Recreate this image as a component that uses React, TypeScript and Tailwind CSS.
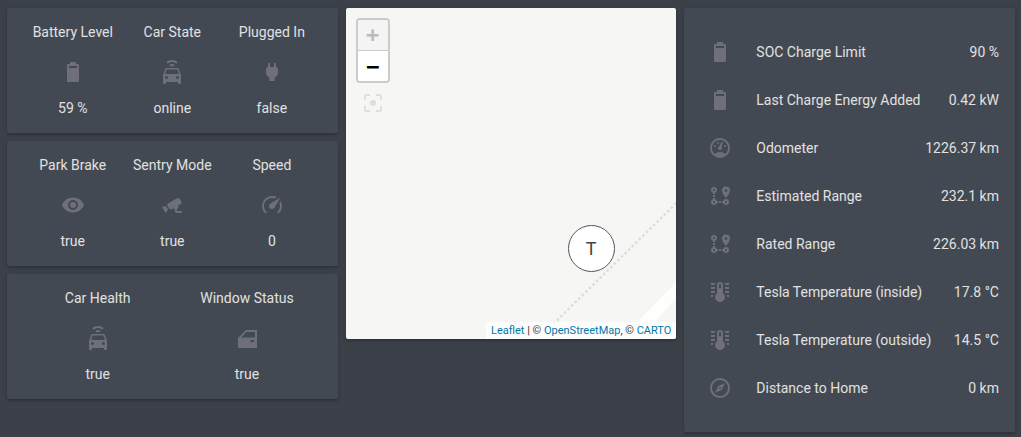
const battery = "M16.67,4H15V2H9V4H7.33A1.33,1.33 0 0,0 6,5.33V20.67C6,21.4 6.6,22 7.33,22H16.67A1.33,1.33 0 0,0 18,20.67V5.33C18,4.6 17.4,4 16.67,4M16,8H8V6H16V8Z";
const carConnected = "M5,14H19L17.5,9.5H6.5L5,14M17.5,19A1.5,1.5 0 0,0 19,17.5A1.5,1.5 0 0,0 17.5,16A1.5,1.5 0 0,0 16,17.5A1.5,1.5 0 0,0 17.5,19M6.5,19A1.5,1.5 0 0,0 8,17.5A1.5,1.5 0 0,0 6.5,16A1.5,1.5 0 0,0 5,17.5A1.5,1.5 0 0,0 6.5,19M18.92,9L21,15V23A1,1 0 0,1 20,24H19A1,1 0 0,1 18,23V22H6V23A1,1 0 0,1 5,24H4A1,1 0 0,1 3,23V15L5.08,9C5.28,8.42 5.85,8 6.5,8H17.5C18.15,8 18.72,8.42 18.92,9M12,0C14.12,0 16.15,.86 17.65,2.35L16.23,3.77C15.11,2.65 13.59,2 12,2C10.41,2 8.89,2.65 7.77,3.77L6.36,2.35C7.85,.86 9.88,0 12,0M12,4C13.06,4 14.07,4.44 14.82,5.18L13.4,6.6C13.03,6.22 12.53,6 12,6C11.5,6 10.97,6.22 10.6,6.6L9.18,5.18C9.93,4.44 10.94,4 12,4Z";
const plug = "M16,7V3H14V7H10V3H8V7H8C7,7 6,8 6,9V14.5L9.5,18V21H14.5V18L18,14.5V9C18,8 17,7 16,7Z";
const eye = "M12,9A3,3 0 0,0 9,12A3,3 0 0,0 12,15A3,3 0 0,0 15,12A3,3 0 0,0 12,9M12,17A5,5 0 0,1 7,12A5,5 0 0,1 12,7A5,5 0 0,1 17,12A5,5 0 0,1 12,17M12,4.5C7,4.5 2.73,7.61 1,12C2.73,16.39 7,19.5 12,19.5C17,19.5 21.27,16.39 23,12C21.27,7.61 17,4.5 12,4.5Z";
const cctv = "M18.15,4.94C17.77,4.91 17.37,5 17,5.2L8.35,10.2C7.39,10.76 7.07,12 7.62,12.94L9.12,15.53C9.67,16.5 10.89,16.82 11.85,16.27L13.65,15.23C13.92,15.69 14.32,16.06 14.81,16.27V18.04C14.81,19.13 15.7,20 16.81,20H22V18.04H16.81V16.27C17.72,15.87 18.31,14.97 18.31,14C18.31,13.54 18.19,13.11 17.97,12.73L20.5,11.27C21.47,10.71 21.8,9.5 21.24,8.53L19.74,5.94C19.4,5.34 18.79,5 18.15,4.94M6.22,13.17L2,13.87L2.75,15.17L4.75,18.63L5.5,19.93L8.22,16.63L6.22,13.17Z";
const speedometer = "M12,16A3,3 0 0,1 9,13C9,11.88 9.61,10.9 10.5,10.39L20.21,4.77L14.68,14.35C14.18,15.33 13.17,16 12,16M12,3C13.81,3 15.5,3.5 16.97,4.32L14.87,5.53C14,5.19 13,5 12,5A8,8 0 0,0 4,13C4,15.21 4.89,17.21 6.34,18.65H6.35C6.74,19.04 6.74,19.67 6.35,20.06C5.96,20.45 5.32,20.45 4.93,20.07V20.07C3.12,18.26 2,15.76 2,13A10,10 0 0,1 12,3M22,13C22,15.76 20.88,18.26 19.07,20.07V20.07C18.68,20.45 18.05,20.45 17.66,20.06C17.27,19.67 17.27,19.04 17.66,18.65V18.65C19.11,17.2 20,15.21 20,13C20,12 19.81,11 19.46,10.1L20.67,8C21.5,9.5 22,11.18 22,13Z";
const carDoor = "M3,12L11,4H22V22H3V12ZM11.5,6L6,11.5H20V6H11.5ZM15.5,14H19V16H15.5V14Z";
const gauge = "M12,2A10,10 0 0,0 2,12A10,10 0 0,0 12,22A10,10 0 0,0 22,12A10,10 0 0,0 12,2M12,4A8,8 0 0,1 20,12C20,14.4 19,16.5 17.3,18C15.9,16.7 14,16 12,16C10,16 8.2,16.7 6.7,18C5,16.5 4,14.4 4,12A8,8 0 0,1 12,4M14,5.89C13.62,5.9 13.26,6.15 13.1,6.54L11.81,9.77L11.71,10C11,10.13 10.41,10.6 10.14,11.26C9.73,12.29 10.23,13.45 11.26,13.86C12.29,14.27 13.45,13.77 13.86,12.74C14.12,12.08 14,11.32 13.57,10.76L13.67,10.5L14.96,7.29L14.97,7.26C15.17,6.75 14.92,6.17 14.41,5.96C14.28,5.91 14.15,5.89 14,5.89M10,6A1,1 0 0,0 9,7A1,1 0 0,0 10,8A1,1 0 0,0 11,7A1,1 0 0,0 10,6M7,9A1,1 0 0,0 6,10A1,1 0 0,0 7,11A1,1 0 0,0 8,10A1,1 0 0,0 7,9M17,9A1,1 0 0,0 16,10A1,1 0 0,0 17,11A1,1 0 0,0 18,10A1,1 0 0,0 17,9Z";
const markerPath = "M18,15A3,3 0 0,1 21,18A3,3 0 0,1 18,21C16.69,21 15.58,20.17 15.17,19H14V17H15.17C15.58,15.83 16.69,15 18,15M18,17A1,1 0 0,0 17,18A1,1 0 0,0 18,19A1,1 0 0,0 19,18A1,1 0 0,0 18,17M18,8A1.43,1.43 0 0,0 19.43,6.57C19.43,5.78 18.79,5.14 18,5.14C17.21,5.14 16.57,5.78 16.57,6.57A1.43,1.43 0 0,0 18,8M18,2.57A4,4 0 0,1 22,6.57C22,9.56 18,14 18,14C18,14 14,9.56 14,6.57A4,4 0 0,1 18,2.57M8.83,17H10V19H8.83C8.42,20.17 7.31,21 6,21A3,3 0 0,1 3,18C3,16.69 3.83,15.58 5,15.17V14H7V15.17C7.85,15.47 8.53,16.15 8.83,17M6,17A1,1 0 0,0 5,18A1,1 0 0,0 6,19A1,1 0 0,0 7,18A1,1 0 0,0 6,17M6,3A3,3 0 0,1 9,6C9,7.31 8.17,8.42 7,8.83V10H5V8.83C3.83,8.42 3,7.31 3,6A3,3 0 0,1 6,3M6,5A1,1 0 0,0 5,6A1,1 0 0,0 6,7A1,1 0 0,0 7,6A1,1 0 0,0 6,5M11,19V17H13V19H11M7,13H5V11H7V13Z";
const thermometer = "M17,3H21V5H17V3M17,7H21V9H17V7M17,11H21V13H17.75L17,12.1V11M21,15V17H19C19,16.31 18.9,15.63 18.71,15H21M7,3V5H3V3H7M7,7V9H3V7H7M7,11V12.1L6.25,13H3V11H7M3,15H5.29C5.1,15.63 5,16.31 5,17H3V15M15,13V5A3,3 0 0,0 12,2A3,3 0 0,0 9,5V13A6,6 0 0,0 7,17A5,5 0 0,0 12,22A5,5 0 0,0 17,17C17,15.79 16.21,14.27 15,13M12,4A1,1 0 0,1 13,5V8H11V5A1,1 0 0,1 12,4Z";
const compass = "M7,17L10.2,10.2L17,7L13.8,13.8L7,17M12,11.1A0.9,0.9 0 0,0 11.1,12A0.9,0.9 0 0,0 12,12.9A0.9,0.9 0 0,0 12.9,12A0.9,0.9 0 0,0 12,11.1M12,2A10,10 0 0,1 22,12A10,10 0 0,1 12,22A10,10 0 0,1 2,12A10,10 0 0,1 12,2M12,4A8,8 0 0,0 4,12A8,8 0 0,0 12,20A8,8 0 0,0 20,12A8,8 0 0,0 12,4Z";
const focus = "M19,19H15V21H19A2,2 0 0,0 21,19V15H19M19,3H15V5H19V9H21V5A2,2 0 0,0 19,3M5,5H9V3H5A2,2 0 0,0 3,5V9H5M5,15H3V19A2,2 0 0,0 5,21H9V19H5V15M12,9A3,3 0 0,0 9,12A3,3 0 0,0 12,15A3,3 0 0,0 15,12A3,3 0 0,0 12,9Z";

function Icon({ d }: { d: string }) {
  return (
    <svg viewBox="0 0 24 24" className="h-6 w-6 fill-[#6f6f7b]" fillRule="evenodd">
      <path d={d} />
    </svg>
  );
}

const cards = [
  [
    { title: "Battery Level", icon: battery, value: "59 %" },
    { title: "Car State", icon: carConnected, value: "online" },
    { title: "Plugged In", icon: plug, value: "false" },
  ],
  [
    { title: "Park Brake", icon: eye, value: "true" },
    { title: "Sentry Mode", icon: cctv, value: "true" },
    { title: "Speed", icon: speedometer, value: "0" },
  ],
  [
    { title: "Car Health", icon: carConnected, value: "true" },
    { title: "Window Status", icon: carDoor, value: "true" },
  ],
];

const rows = [
  { icon: battery, label: "SOC Charge Limit", value: "90 %" },
  { icon: battery, label: "Last Charge Energy Added", value: "0.42 kW" },
  { icon: gauge, label: "Odometer", value: "1226.37 km" },
  { icon: markerPath, label: "Estimated Range", value: "232.1 km" },
  { icon: markerPath, label: "Rated Range", value: "226.03 km" },
  { icon: thermometer, label: "Tesla Temperature (inside)", value: "17.8 °C" },
  { icon: thermometer, label: "Tesla Temperature (outside)", value: "14.5 °C" },
  { icon: compass, label: "Distance to Home", value: "0 km" },
];

function MapCard() {
  return (
    <div className="relative h-[331px] overflow-hidden rounded-[2px] bg-[#f6f6f4] shadow-[0_2px_2px_rgba(0,0,0,0.14),0_1px_5px_rgba(0,0,0,0.12)]">
      <svg viewBox="0 0 330 331" className="absolute inset-0 h-full w-full">
        <path d="M207 316L330 195" stroke="#dddddb" strokeWidth="2.5" strokeDasharray="2.5 2.5" fill="none" />
        <polygon points="291,314 330,274 330,289 309,314 291,331" fill="#fefefd" />
      </svg>
      <div className="absolute left-[10px] top-[10px] w-[34px] overflow-hidden rounded-[4px] border-2 border-[#cbcbca] font-['DejaVu_Sans_Mono',monospace] text-[22px] font-bold leading-[30px]">
        <div className="h-[31px] border-b border-[#ccc] bg-[#f4f4f4] text-center text-[#bbb]">+</div>
        <div className="h-[30px] bg-white pt-[1px] text-center text-black">−</div>
      </div>
      <svg viewBox="0 0 24 24" className="absolute left-[15px] top-[83px] h-6 w-6 fill-[#dedede]">
        <path d={focus} />
      </svg>
      <div className="absolute left-[222px] top-[217px] flex h-[47px] w-[47px] items-center justify-center rounded-full border border-[#555] bg-white font-['Roboto',sans-serif] text-lg text-[#444]">
        T
      </div>
      <div className="absolute bottom-0 right-0 bg-white/80 px-[5px] font-['Roboto',sans-serif] text-[11px] leading-[17px] text-[#333]">
        <span className="text-[#0078a8]">Leaflet</span> | © <span className="text-[#0078a8]">OpenStreetMap</span>, © <span className="text-[#0078a8]">CARTO</span>
      </div>
    </div>
  );
}

export default function App() {
  return (
    <div className="h-[437px] w-[1021px] overflow-hidden bg-[#3c4048] font-['Roboto',sans-serif] text-sm text-[#e1e1e1]">
      <div className="grid grid-cols-3 items-start gap-2 pl-[7px] pr-[6px] pt-2">
        <div className="flex flex-col gap-2">
          {cards.map((items) => (
            <div
              key={items[0].title}
              className="flex h-[125px] rounded-[2px] bg-[#434952] px-4 pb-[15px] pt-[14px] shadow-[0_2px_2px_rgba(0,0,0,0.14),0_1px_5px_rgba(0,0,0,0.12)]"
            >
              {items.map((item) => (
                <div key={item.title} className="flex flex-1 flex-col items-center leading-5">
                  <div>{item.title}</div>
                  <div className="mb-[14px] mt-[18px]">
                    <Icon d={item.icon} />
                  </div>
                  <div>{item.value}</div>
                </div>
              ))}
            </div>
          ))}
        </div>
        <MapCard />
        <div className="flex flex-col rounded-[2px] bg-[#434952] py-5 pl-6 pr-4 shadow-[0_2px_2px_rgba(0,0,0,0.14),0_1px_5px_rgba(0,0,0,0.12)]">
          {rows.map((row) => (
            <div key={row.label} className="flex h-12 items-center">
              <Icon d={row.icon} />
              <div className="ml-6 flex-1">{row.label}</div>
              <div>{row.value}</div>
            </div>
          ))}
        </div>
      </div>
    </div>
  );
}
